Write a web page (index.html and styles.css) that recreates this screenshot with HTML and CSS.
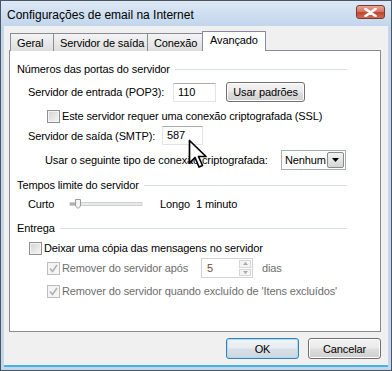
FILE: index.html
```html
<html>
  <head>
    <title>Configurações de email na Internet</title>
    <meta charset="utf-8" />
    <link rel="stylesheet" href="styles.css">
  </head>
  <body>
    <div class="window">
      <div class="titlebar">
        <span class="title">Configurações de email na Internet</span>
        <span class="close">
          <svg width="13" height="9" viewBox="0 0 13 9"><path d="M1.5 1 L11.5 8 M11.5 1 L1.5 8" stroke="#fff" stroke-width="2.6" stroke-linecap="round"/></svg>
        </span>
      </div>
      <div class="client">
        <div class="tabs">
          <div class="tab w-geral">Geral</div>
          <div class="tab w-saida">Servidor de saída</div>
          <div class="tab w-conexao">Conexão</div>
          <div class="tab active w-avancado">Avançado</div>
        </div>
        <div class="panel">
          <div class="group g-portas"><span>Números das portas do servidor</span><i></i></div>

          <div class="row r-pop">
            <span class="lbl w145">Servidor de entrada (POP3):</span>
            <span class="field w43">110</span>
            <span class="btn small">Usar padrões</span>
          </div>

          <div class="row r-ssl">
            <span class="check"></span>
            <span class="ctext">Este servidor requer uma conexão criptografada (SSL)</span>
          </div>

          <div class="row r-smtp">
            <span class="lbl w134">Servidor de saída (SMTP):</span>
            <span class="field w41">587</span>
          </div>

          <div class="row r-usar">
            <span class="lbl w236">Usar o seguinte tipo de conexão criptografada:</span>
            <span class="select">
              <span class="sel-val">Nenhum</span>
              <span class="sel-btn"><svg width="7" height="4" viewBox="0 0 7 4"><path d="M0 0 H7 L3.5 4 Z" fill="#000"/></svg></span>
            </span>
          </div>

          <div class="group g-tempos"><span>Tempos limite do servidor</span><i></i></div>

          <div class="row r-curto">
            <span class="lbl w40">Curto</span>
            <svg class="slider" width="76" height="16" viewBox="0 0 76 16">
              <rect x="2" y="6.5" width="72" height="3" fill="#e7eaea" stroke="#d0d0d0"/>
              <line x1="2" y1="8" x2="8" y2="8" stroke="#9a9a9a" stroke-width="1.5"/>
              <path d="M7.5 3.5 H12.5 V10 L10 12.5 L7.5 10 Z" fill="#f4f4f4" stroke="#9a9a9a"/>
            </svg>
            <span class="lbl longo">Longo</span>
            <span>1 minuto</span>
          </div>

          <div class="group g-entrega"><span>Entrega</span><i></i></div>

          <div class="row r-deixar">
            <span class="check"></span>
            <span class="ctext">Deixar uma cópia das mensagens no servidor</span>
          </div>

          <div class="row r-rem1 disabled">
            <span class="check on">
              <svg width="9" height="9" viewBox="0 0 9 9"><path d="M1 4.5 L3.5 7.5 L8 1" fill="none" stroke="#b0b0b0" stroke-width="1.6"/></svg>
            </span>
            <span class="ctext w139">Remover do servidor após</span>
            <span class="spin">
              <span class="spin-val">5</span>
              <span class="spin-btns">
                <span class="spin-b"><svg width="5" height="3" viewBox="0 0 5 3"><path d="M0 3 H5 L2.5 0 Z" fill="#a8a8a8"/></svg></span>
                <span class="spin-b"><svg width="5" height="3" viewBox="0 0 5 3"><path d="M0 0 H5 L2.5 3 Z" fill="#a8a8a8"/></svg></span>
              </span>
            </span>
            <span class="dias">dias</span>
          </div>

          <div class="row r-rem2 disabled">
            <span class="check on">
              <svg width="9" height="9" viewBox="0 0 9 9"><path d="M1 4.5 L3.5 7.5 L8 1" fill="none" stroke="#b0b0b0" stroke-width="1.6"/></svg>
            </span>
            <span class="ctext">Remover do servidor quando excluído de 'Itens excluídos'</span>
          </div>
        </div>
        <div class="footer">
          <span class="btn default">OK</span>
          <span class="btn">Cancelar</span>
        </div>
      </div>
      <svg class="cursor" width="20" height="32" viewBox="0 0 20 32">
        <path d="M1.5 1.5 V24 L7 18.5 L11 28 L14.5 26.5 L10.5 17.5 H18 Z" fill="#fff" stroke="#000" stroke-width="1.7" stroke-linejoin="round"/>
      </svg>
    </div>
  </body>
</html>
```

FILE: styles.css
```css
* {
  box-sizing: border-box;
}

body {
  margin: 0;
  font-family: "Liberation Sans", Arial, sans-serif;
  font-size: 11px;
  letter-spacing: -0.12px;
  color: #000;
  background: #fff;
}

.window {
  position: relative;
  width: 392px;
  height: 371px;
  display: flex;
  flex-direction: column;
  padding: 0 3px 3px 3px;
  border: 1px solid #4b5663;
  background: #c2d6ec;
}

.titlebar {
  height: 25px;
  margin: 0 -3px;
  padding: 0 6px 0 6px;
  display: flex;
  justify-content: space-between;
  align-items: flex-start;
  background: linear-gradient(#dce8f5, #c2d6ec);
}

.title {
  font-size: 12px;
  letter-spacing: 0;
  margin-top: 7px;
  color: #000;
}

.close {
  width: 29px;
  height: 14px;
  margin-top: 4px;
  display: flex;
  align-items: center;
  justify-content: center;
  border: 1px solid #7a3a34;
  border-radius: 3px;
  background: linear-gradient(#e8a597, #d37a68 45%, #c04530 55%, #cd6c52);
}

.client {
  flex: 1;
  background: #f0f0f0;
  padding: 5px 0 0 5px;
  border-bottom: 2px solid #47b2e6;
}

/* tabs */

.tabs {
  height: 20px;
  margin-left: 1px;
  margin-bottom: -1px;
  display: flex;
  align-items: flex-end;
}

.tab {
  height: 18px;
  margin-left: -1px;
  padding: 3px 0 0 6px;
  border: 1px solid #898c95;
  border-bottom: none;
  background: linear-gradient(#f4f4f4, #e9e9e9 50%, #dedede);
  white-space: nowrap;
  overflow: hidden;
}

.tab:first-child {
  margin-left: 0;
}

.tab.active {
  position: relative;
  z-index: 1;
  height: 20px;
  padding-top: 2px;
  padding-left: 7px;
  background: #fff;
}

.w-geral { width: 44px; }
.w-saida { width: 95px; }
.w-conexao { width: 56px; }
.w-avancado { width: 64px; }

.panel {
  width: 372px;
  height: 282px;
  border: 1px solid #898c95;
  background: #fff;
}

/* group headers */

.group {
  height: 14px;
  padding-left: 7px;
  padding-right: 33px;
  display: flex;
  align-items: center;
}

.group i {
  flex: 1;
  height: 1px;
  margin-left: 5px;
  background: #d5dfe5;
}

.g-portas { margin-top: 11px; }
.g-tempos { margin-top: 8px; }
.g-entrega { margin-top: 9px; }

/* rows */

.row {
  display: flex;
  align-items: center;
  white-space: nowrap;
}

.r-pop { height: 20px; margin-top: 6px; padding-left: 18px; }
.r-ssl { height: 14px; margin-top: 7px; padding-left: 37px; }
.r-smtp { height: 19px; margin-top: 3px; padding-left: 18px; }
.r-usar { height: 20px; margin-top: 5px; padding-left: 35px; }
.r-curto { height: 16px; margin-top: 4px; padding-left: 18px; }
.r-deixar { height: 14px; margin-top: 6px; padding-left: 19px; }
.r-rem1 { height: 20px; margin-top: 3px; padding-left: 37px; }
.r-rem2 { height: 14px; margin-top: 6px; padding-left: 37px; }

.lbl { display: inline-block; flex: none; }
.w145 { width: 145px; }
.w134 { width: 134px; }
.w236 { width: 236px; }
.w40 { width: 40px; }
.w139 { width: 139px; flex: none; }
.longo { width: 36px; margin-left: 16px; }

.disabled {
  color: #6d6d6d;
}

/* inputs */

.field {
  height: 19px;
  padding: 2px 0 0 4px;
  border: 1px solid #e2e3ea;
  border-top-color: #abadb3;
  background: #fff;
}

.w43 { width: 43px; }
.w41 { width: 41px; }

.check {
  width: 13px;
  height: 13px;
  flex: none;
  display: flex;
  align-items: center;
  justify-content: center;
  border: 1px solid #8e8f8f;
  background: linear-gradient(135deg, #d2d2d2, #f7f7f7);
  box-shadow: inset 0 0 0 1px #f4f4f4;
}

.check.on {
  border-color: #bcbcbc;
  background: #f4f4f4;
}

.ctext {
  margin-left: 2px;
}

.select {
  width: 65px;
  height: 20px;
  display: flex;
  align-items: center;
  padding: 0 1px 0 3px;
  border: 1px solid #a5acb5;
  background: #fff;
}

.sel-val {
  flex: 1;
}

.sel-btn {
  width: 17px;
  height: 16px;
  display: flex;
  align-items: center;
  justify-content: center;
  border: 1px solid #8a8a8a;
  border-radius: 2px;
  background: linear-gradient(#f2f2f2, #e4e4e4 50%, #d4d4d4);
}

.slider {
  display: block;
}

.spin {
  width: 52px;
  height: 20px;
  display: flex;
  border: 1px solid #d2d2d2;
  background: #fff;
}

.spin-val {
  flex: 1;
  padding: 3px 0 0 5px;
  color: #6d4c3c;
}

.spin-btns {
  width: 13px;
  display: flex;
  flex-direction: column;
  gap: 1px;
  padding: 1px 1px 1px 0;
}

.spin-b {
  flex: 1;
  display: flex;
  align-items: center;
  justify-content: center;
  border: 1px solid #d6d6d6;
  background: #f4f4f4;
}

.dias {
  margin-left: 9px;
}

/* buttons */

.btn {
  height: 21px;
  display: inline-flex;
  align-items: center;
  justify-content: center;
  border: 1px solid #707070;
  border-radius: 3px;
  background: linear-gradient(#f2f2f2, #ebebeb 45%, #dddddd 55%, #cfcfcf);
  box-shadow: inset 0 0 0 1px #fcfcfc;
}

.btn.small {
  width: 79px;
  height: 20px;
  margin-left: 10px;
}

.footer {
  width: 372px;
  margin-top: 6px;
  display: flex;
  justify-content: flex-end;
  gap: 9px;
}

.footer .btn {
  width: 73px;
}

.btn.default {
  border-color: #3c7fb1;
  box-shadow: inset 0 0 0 1px #a9dcf6;
  background: linear-gradient(#f0f4f7, #e7edf1 45%, #d8e0e6 55%, #cdd6dd);
}

/* mouse pointer drawn over the dialog */

.cursor {
  position: absolute;
  left: 187px;
  top: 138px;
}
```
